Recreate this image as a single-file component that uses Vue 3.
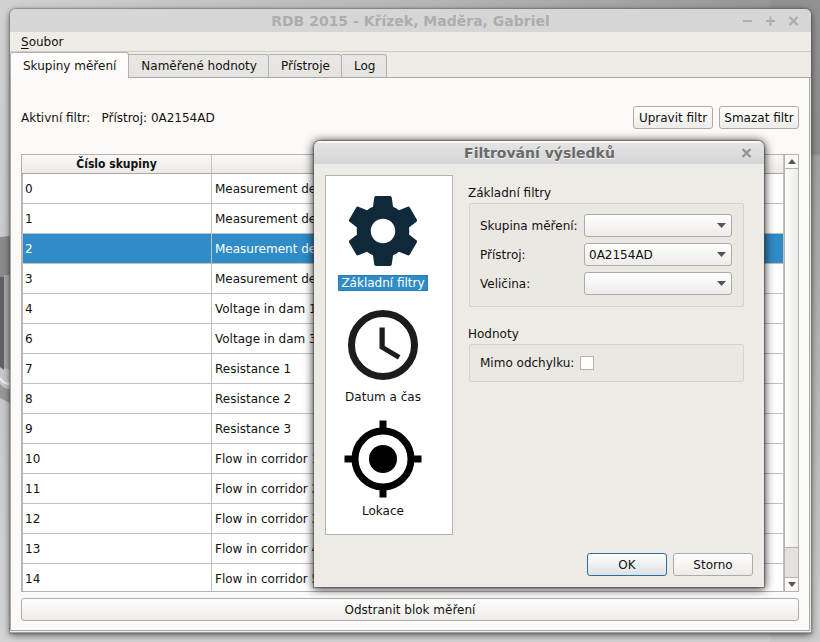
<script setup>
import { ref } from 'vue'

const tabs = ['Skupiny měření', 'Naměřené hodnoty', 'Přístroje', 'Log']
const activeTab = ref(0)

const rows = [
  [0, 'Measurement device 1'],
  [1, 'Measurement device 2'],
  [2, 'Measurement device 3'],
  [3, 'Measurement device 4'],
  [4, 'Voltage in dam 1'],
  [6, 'Voltage in dam 3'],
  [7, 'Resistance 1'],
  [8, 'Resistance 2'],
  [9, 'Resistance 3'],
  [10, 'Flow in corridor 1'],
  [11, 'Flow in corridor 2'],
  [12, 'Flow in corridor 3'],
  [13, 'Flow in corridor 4'],
  [14, 'Flow in corridor 5'],
]
const selectedRow = ref(2)

const sections = [
  { label: 'Základní filtry', icon: 'gear' },
  { label: 'Datum a čas', icon: 'clock' },
  { label: 'Lokace', icon: 'target' },
]
const activeSection = ref(0)

const group = ref('')
const device = ref('0A2154AD')
const quantity = ref('')
const outOfRange = ref(false)
</script>

<template>
  <div class="desktop">
    <svg class="wallpaper" viewBox="0 0 10 200" aria-hidden="true">
      <path d="M0 17l10-1v124l-10-6z" fill="#8b8b8b" />
      <path d="M0 57h4v93l-4-3z" fill="#626262" />
      <path d="M4 55h6v95l-6-2z" fill="#aaa" />
      <path d="M0 158q3 6 10 6" fill="none" stroke="#eee" stroke-width="2" />
      <path d="M0 164q4 5 10 5v14l-10-5z" fill="#999" />
    </svg>

    <main class="window">
      <header class="titlebar">
        <h1 class="title">RDB 2015 - Křízek, Maděra, Gabriel</h1>
        <div class="winbuttons">
          <button type="button" class="winbtn" aria-label="Minimalizovat">
            <svg width="11" height="11" viewBox="0 0 11 11"><path d="M1 6h9" /></svg>
          </button>
          <button type="button" class="winbtn" aria-label="Maximalizovat">
            <svg width="11" height="11" viewBox="0 0 11 11"><path d="M1 6h9M5.5 1.5v9" /></svg>
          </button>
          <button type="button" class="winbtn" aria-label="Zavřít">
            <svg width="11" height="11" viewBox="0 0 11 11"><path d="M1.500 2l8 8M9.500 2l-8 8" stroke-width="2.400" /></svg>
          </button>
        </div>
      </header>

      <nav class="menubar">
        <button type="button" class="menu"><u>S</u>oubor</button>
      </nav>

      <div class="tabs" role="tablist">
        <button
          v-for="(tab, i) in tabs"
          :key="tab"
          type="button"
          role="tab"
          class="tab"
          :class="{ active: i === activeTab }"
          :aria-selected="i === activeTab"
          @click="activeTab = i"
        >{{ tab }}</button>
      </div>

      <section class="pane">
        <div class="filterbar">
          <span>Aktivní filtr:</span>
          <span class="filtertext">Přístroj: 0A2154AD</span>
          <button type="button" class="btn">Upravit filtr</button>
          <button type="button" class="btn">Smazat filtr</button>
        </div>

        <div class="tablebox">
          <div class="tableclip">
            <table>
              <colgroup>
                <col class="colnum" />
                <col />
              </colgroup>
              <thead>
                <tr>
                  <th scope="col">Číslo skupiny</th>
                  <th scope="col"></th>
                </tr>
              </thead>
              <tbody>
                <tr
                  v-for="row in rows"
                  :key="row[0]"
                  :class="{ selected: row[0] === selectedRow }"
                  @click="selectedRow = row[0]"
                >
                  <td>{{ row[0] }}</td>
                  <td>{{ row[1] }}</td>
                </tr>
              </tbody>
            </table>
          </div>
          <div class="scrollbar">
            <button type="button" class="arrow up" aria-label="Nahoru">
              <svg width="8" height="5" viewBox="0 0 8 5"><path d="M4 0l4 5h-8z" /></svg>
            </button>
            <div class="thumb"></div>
            <div class="groove"></div>
            <button type="button" class="arrow down" aria-label="Dolů">
              <svg width="8" height="5" viewBox="0 0 8 5"><path d="M4 5l4-5h-8z" /></svg>
            </button>
          </div>
        </div>

        <button type="button" class="btn wide">Odstranit blok měření</button>
      </section>
    </main>

    <div class="dialog" role="dialog" aria-labelledby="dialog-title">
      <header class="titlebar front">
        <h2 id="dialog-title" class="title">Filtrování výsledků</h2>
        <div class="winbuttons">
          <button type="button" class="winbtn" aria-label="Zavřít">
            <svg width="11" height="11" viewBox="0 0 11 11"><path d="M1.500 2l8 8M9.500 2l-8 8" stroke-width="2.400" /></svg>
          </button>
        </div>
      </header>

      <div class="dialogbody">
        <div class="sections">
          <button
            v-for="(s, i) in sections"
            :key="s.icon"
            type="button"
            class="section"
            :class="{ active: i === activeSection }"
            @click="activeSection = i"
          >
            <svg v-if="s.icon === 'gear'" width="84" height="84" viewBox="0 0 24 24" fill="#10293a">
              <path d="M19.43 12.98c.04-.32.07-.64.07-.98s-.03-.66-.07-.98l2.11-1.65c.19-.15.24-.42.12-.64l-2-3.46c-.12-.22-.39-.3-.61-.22l-2.49 1c-.52-.4-1.08-.73-1.69-.98l-.38-2.65C14.46 2.18 14.25 2 14 2h-4c-.25 0-.46.18-.49.42l-.38 2.65c-.61.25-1.17.59-1.69.98l-2.49-1c-.23-.09-.49 0-.61.22l-2 3.46c-.13.22-.07.49.12.64l2.11 1.65c-.04.32-.07.65-.07.98s.03.66.07.98l-2.11 1.65c-.19.15-.24.42-.12.64l2 3.46c.12.22.39.3.61.22l2.49-1c.52.4 1.08.73 1.69.98l.38 2.65c.03.24.24.42.49.42h4c.25 0 .46-.18.49-.42l.38-2.65c.61-.25 1.17-.59 1.69-.98l2.49 1c.23.09.49 0 .61-.22l2-3.46c.12-.22.07-.49-.12-.64l-2.11-1.65zM12 15.5c-1.93 0-3.5-1.57-3.5-3.5s1.57-3.5 3.5-3.5 3.5 1.57 3.5 3.5-1.57 3.5-3.5 3.5z" />
            </svg>
            <svg v-else-if="s.icon === 'clock'" width="84" height="84" viewBox="0 0 24 24" fill="#1c1c1c">
              <circle cx="12" cy="12" r="9" fill="none" stroke="#1c1c1c" stroke-width="2" />
              <path d="M12.5 7H11v6l5.25 3.15.75-1.23-4.5-2.67z" />
            </svg>
            <svg v-else width="84" height="84" viewBox="0 0 24 24" fill="none" stroke="#000" stroke-width="2">
              <circle cx="12" cy="12" r="8" />
              <path d="M12 1v3M12 20v3M1 12h3M20 12h3" />
              <circle cx="12" cy="12" r="4" fill="#000" stroke="none" />
            </svg>
            <span class="sectionlabel">{{ s.label }}</span>
          </button>
        </div>

        <form class="form" @submit.prevent>
          <fieldset>
            <legend>Základní filtry</legend>
            <div class="frame">
              <label for="group">Skupina měření:</label>
              <div class="combo">
                <select id="group" v-model="group">
                  <option value=""></option>
                </select>
                <svg width="9" height="5" viewBox="0 0 9 5"><path d="M0 0h9l-4.5 5z" /></svg>
              </div>
              <label for="device">Přístroj:</label>
              <div class="combo">
                <select id="device" v-model="device">
                  <option>0A2154AD</option>
                </select>
                <svg width="9" height="5" viewBox="0 0 9 5"><path d="M0 0h9l-4.5 5z" /></svg>
              </div>
              <label for="quantity">Veličina:</label>
              <div class="combo">
                <select id="quantity" v-model="quantity">
                  <option value=""></option>
                </select>
                <svg width="9" height="5" viewBox="0 0 9 5"><path d="M0 0h9l-4.5 5z" /></svg>
              </div>
            </div>
          </fieldset>

          <fieldset>
            <legend>Hodnoty</legend>
            <div class="frame checkframe">
              <label for="range">Mimo odchylku:</label>
              <input id="range" v-model="outOfRange" type="checkbox" />
            </div>
          </fieldset>
        </form>
      </div>

      <footer class="actions">
        <button type="button" class="btn primary">OK</button>
        <button type="button" class="btn">Storno</button>
      </footer>
    </div>
  </div>
</template>

<style>
body {
  margin: 0;
}
</style>

<style scoped>
.desktop,
.desktop * {
  box-sizing: border-box;
}

.desktop {
  position: relative;
  display: flex;
  min-height: 100vh;
  padding: 9px 9px 9px 10px;
  overflow: hidden;
  font: 12px/16px "DejaVu Sans", sans-serif;
  color: #111;
  background:
    linear-gradient(to bottom, #929292, #8e8e8e 150px, #8a8a8a 153px, #a2a2a2 157px, #cdcdcd 100%) right / 50px 100% no-repeat,
    linear-gradient(to right, #d2d2d2, #b8b8b8 50%, #929292) top / 100% 40px no-repeat,
    linear-gradient(to bottom, #d0d0d0, #c8c8c8 60%, #d4d4d4);
}

.wallpaper {
  position: absolute;
  left: 0;
  top: 220px;
  width: 10px;
  height: 200px;
}

button,
select {
  font: inherit;
  color: inherit;
}

.window {
  position: relative;
  flex: 1;
  display: flex;
  flex-direction: column;
  min-width: 0;
  background: #efebe7;
  border-bottom: 1px solid #a3a19f;
  border-radius: 6px 6px 0 0;
  box-shadow: 0 0 1px 1px rgba(90, 90, 90, 0.4), 0 2px 7px rgba(0, 0, 0, 0.6);
}

.titlebar {
  display: flex;
  align-items: center;
  height: 23px;
  padding: 0 12px 0 69px;
  background: #d6d6d6;
  border-radius: 6px 6px 0 0;
  color: #adadad;
}

.title {
  flex: 1;
  margin: 0;
  font-size: 14px;
  line-height: 24px;
  font-weight: bold;
  text-align: center;
}

.winbuttons {
  display: flex;
  gap: 12px;
}

.winbtn {
  display: flex;
  padding: 0;
  border: 0;
  background: none;
}

.winbtn svg {
  fill: none;
  stroke: currentColor;
  stroke-width: 2;
}

.menubar {
  display: flex;
  height: 20px;
  padding: 0 9px;
  border-bottom: 1px solid #d0ccc8;
}

.menu {
  padding: 0 2px;
  border: 0;
  background: none;
}

.menu u {
  text-underline-offset: 2px;
}

.tabs {
  display: flex;
  align-items: flex-end;
  height: 26px;
  background: linear-gradient(#a9a6a3, #a9a6a3) bottom / 100% 1px no-repeat;
}

.tab {
  height: 24px;
  padding: 0 11px 0 12px;
  border: 1px solid #b3b0ad;
  border-left: 0;
  border-bottom-color: #a9a6a3;
  border-radius: 0 3px 0 0;
  background: linear-gradient(#e9e7e4, #e6e4e1);
}

.tab.active {
  height: 26px;
  padding: 0 12px;
  border-left: 1px solid #b3b0ad;
  border-bottom: 0;
  border-radius: 3px 3px 0 0;
  background: linear-gradient(#fff, #fdf9f6);
}

.pane {
  flex: 1;
  display: flex;
  flex-direction: column;
  min-height: 0;
  margin: 0 1px 1px 0;
  padding: 28px 10px 9px;
  background: #fdf9f6;
  border: 1px solid #aaa8a6;
  border-top: 0;
}

.filterbar {
  display: flex;
  align-items: center;
  gap: 6px;
  margin-bottom: 25px;
}

.filtertext {
  flex: 1;
  padding-left: 5px;
}

.btn {
  min-width: 80px;
  height: 23px;
  padding: 0 4px;
  border: 1px solid #aeaaa7;
  border-radius: 3px;
  background: linear-gradient(#fefefe, #eeecea);
  white-space: nowrap;
}

.btn.wide {
  margin-top: 6px;
}

.btn.primary {
  border-color: #2a6f9f;
  background: linear-gradient(#fefefe, #dde2e6);
}

.tablebox {
  flex: 1 1 0;
  display: flex;
  min-height: 0;
  border: 1px solid #b5b2af;
}

.tableclip {
  flex: 1;
  overflow: hidden;
  background: #fff;
}

table {
  width: 100%;
  table-layout: fixed;
  border-collapse: separate;
  border-spacing: 0;
}

.colnum {
  width: 190px;
}

th {
  height: 19px;
  padding: 0;
  font-family: "DejaVu Sans Condensed", "DejaVu Sans", sans-serif;
  font-stretch: condensed;
  border-right: 1px solid #c4c1be;
  border-bottom: 1px solid #a9a6a3;
  background: linear-gradient(#fbf8f5, #eceae7);
}

td {
  height: 30px;
  padding: 0 3px 0 2px;
  border-right: 1px solid #c0c0c0;
  border-bottom: 1px solid #c0c0c0;
  white-space: nowrap;
  overflow: hidden;
}

td:first-child {
  border-left: 1px solid #bcb9b6;
}

td + td {
  padding-left: 3px;
}

.selected td {
  background: #308cc6;
  color: #fff;
}

.scrollbar {
  display: flex;
  flex-direction: column;
  width: 14px;
  border-left: 1px solid #b5b2af;
}

.arrow {
  display: flex;
  align-items: center;
  justify-content: center;
  height: 14px;
  padding: 0;
  border: 0 solid #b5b2af;
  background: #fcfaf8;
}

.arrow svg,
.combo svg {
  fill: #555;
}

.arrow.up {
  border-bottom-width: 1px;
}

.arrow.down {
  border-top-width: 1px;
}

.thumb {
  flex: 379;
  border-bottom: 1px solid #b5b2af;
  background: linear-gradient(to right, #fdfdfd, #edebe9);
}

.groove {
  flex: 29;
  background: #e5e1de;
}

.dialog {
  position: absolute;
  left: 314px;
  top: 141px;
  width: 450px;
  background: #eeebe6;
  border-radius: 6px 6px 0 0;
  box-shadow: 0 0 1px 1px rgba(70, 70, 70, 0.6), 0 1px 10px 1px rgba(0, 0, 0, 0.8);
}

.titlebar.front {
  background: linear-gradient(#fff 1px, #e4e4e4 2px, #d4d6d5);
  color: #6a6a6a;
  padding-left: 24px;
}

.front .title {
  text-shadow: 0 1px 0 #f6f6f6;
}

.front .winbtn {
  color: #949494;
}

.dialogbody {
  display: flex;
  gap: 15px;
  padding: 11px 20px 18px 11px;
}

.sections {
  width: 128px;
  height: 360px;
  padding: 13px 12px;
  background: #fff;
  border: 1px solid #b5b3b0;
}

.section {
  display: flex;
  flex-direction: column;
  align-items: center;
  width: 90px;
  height: 114px;
  padding: 0;
  border: 0;
  background: none;
}

.section svg {
  flex: none;
}

.sectionlabel {
  margin-top: 2px;
  padding: 0 3px;
  white-space: nowrap;
}

.section.active .sectionlabel {
  background: #308cc6;
  color: #fff;
  box-shadow: inset 0 0 0 1px #2a7db1;
}

.form {
  flex: 1;
  padding-top: 10px;
}

fieldset {
  margin: 0 0 19px;
  padding: 0;
  border: 0;
  min-width: 0;
}

legend {
  padding: 0;
}

.frame {
  display: grid;
  grid-template-columns: 98px 1fr;
  align-items: center;
  gap: 6px;
  margin: 2px 0 0 1px;
  padding: 10px 11px 11px 10px;
  border: 1px solid #d6d3cf;
  border-radius: 2px;
  background: #ebe8e3;
}

.checkframe {
  grid-template-columns: auto 1fr;
  height: 38px;
}

.combo {
  display: grid;
  align-items: center;
}

.combo > * {
  grid-area: 1 / 1;
}

.combo svg {
  justify-self: end;
  margin-right: 6px;
  pointer-events: none;
}

select {
  appearance: none;
  width: 100%;
  height: 23px;
  padding: 0 20px 0 4px;
  border: 1px solid #aeaaa7;
  border-radius: 3px;
  background: linear-gradient(#fefefe, #eeecea);
}

input[type="checkbox"] {
  appearance: none;
  width: 14px;
  height: 14px;
  margin: 0;
  border: 1px solid #b5b3b0;
  background: #fff;
}

.actions {
  display: flex;
  justify-content: flex-end;
  gap: 6px;
  padding: 0 11px 11px;
}
</style>
